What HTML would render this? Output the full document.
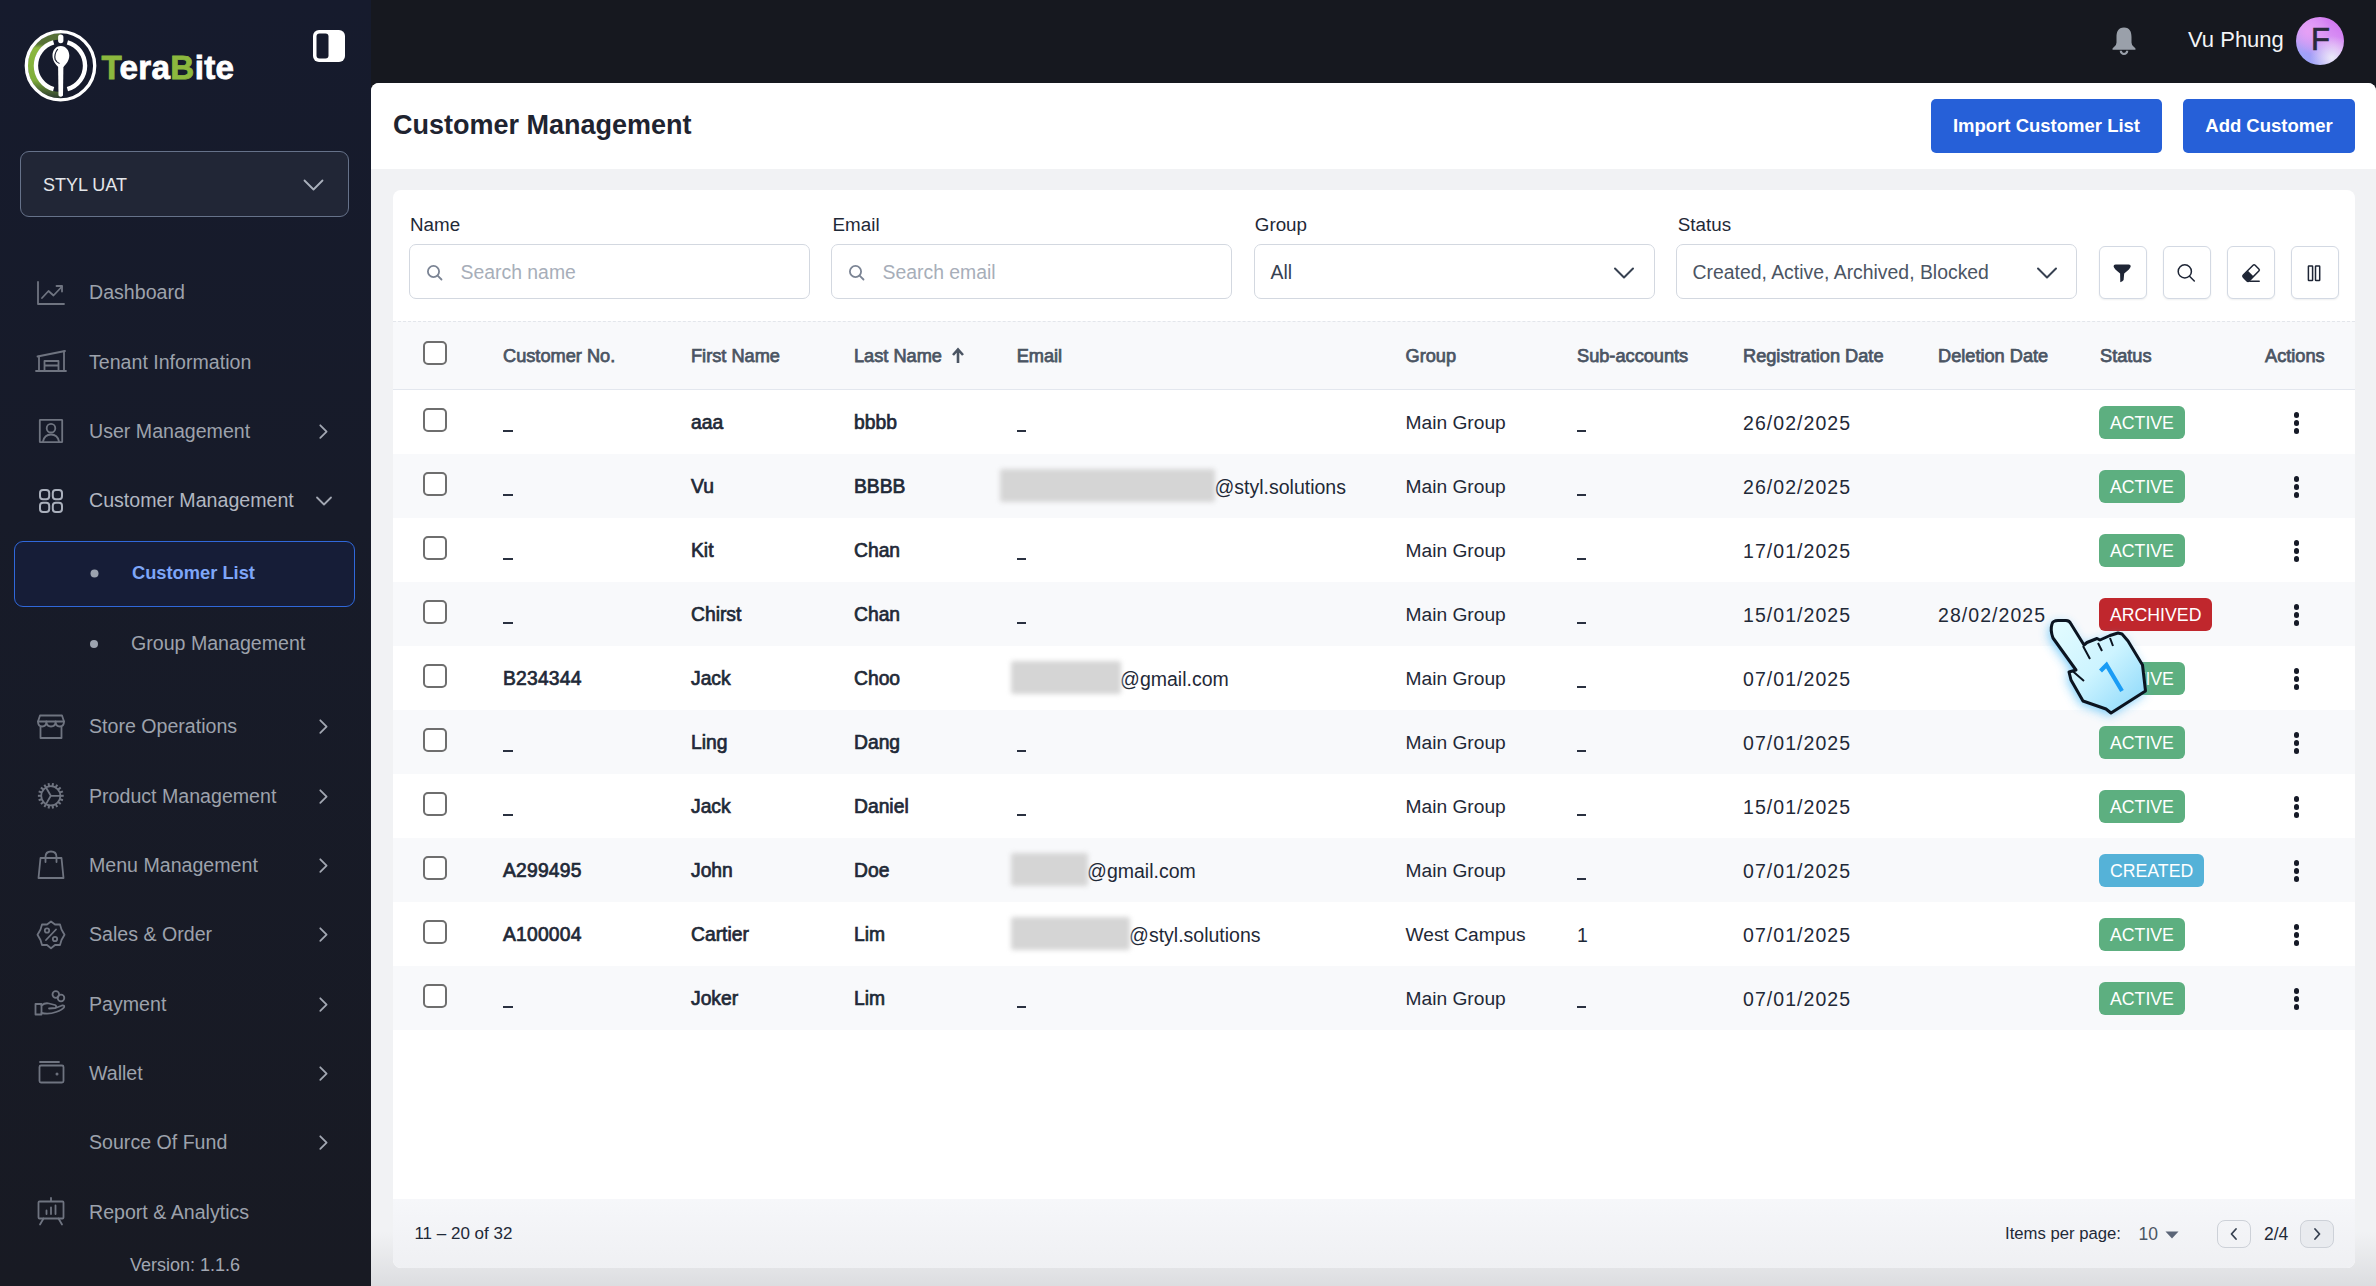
<!DOCTYPE html>
<html><head><meta charset="utf-8">
<style>
*{box-sizing:border-box;margin:0;padding:0}
html,body{width:2376px;height:1286px;overflow:hidden}
body{background:#16181f;font-family:"Liberation Sans",sans-serif;position:relative;color:#1f2937}
.abs{position:absolute}
#sidebar{position:absolute;left:0;top:0;width:371px;height:1286px;background:linear-gradient(180deg,#161b2d 0%,#171b29 40%,#181a23 100%)}
.mi{position:absolute;left:0;width:371px;height:40px;color:#9da2ac;font-size:19.6px;line-height:42px}
.mi .t{position:absolute;left:89px;top:0;white-space:nowrap}
.mi svg.ic{position:absolute;left:35px;top:6px}
.mi svg.ch{position:absolute;left:314px;top:12px}
#topbar{position:absolute;left:371px;top:0;width:2005px;height:83px;background:#16181f}
#main{position:absolute;left:371px;top:83px;width:2005px;height:1203px;background:linear-gradient(180deg,#f1f2f4 0%,#f1f2f4 95.5%,#dcdde0 100%);border-radius:8px 8px 0 0;overflow:hidden}
#hdr{position:absolute;left:0;top:0;width:2005px;height:86px;background:#fff}
.btn{position:absolute;top:16px;height:54px;background:#2660d8;border-radius:5px;color:#fff;font-weight:bold;font-size:18.5px;line-height:54px;text-align:center}
#card{position:absolute;left:22px;top:107px;width:1962px;height:1078px;background:#fff;border-radius:8px;overflow:hidden}
.lbl{position:absolute;top:26px;font-size:18.8px;color:#1f2937;white-space:nowrap}
.inp{position:absolute;top:53px;height:55px;border:1.5px solid #d3d8e0;border-radius:7px;background:#fff;font-size:19.4px;line-height:52px;white-space:nowrap}
.ib{position:absolute;top:56px;width:48px;height:53px;border:1.5px solid #d3d9e3;border-radius:6px;background:#fff;box-shadow:0 1px 2px rgba(16,24,40,0.07)}
#thead{position:absolute;left:0;top:131px;width:1962px;height:69px;background:#f8f9fb;border-top:1.5px dashed #e3e6eb;border-bottom:1.5px solid #e3e7ee}
.th{position:absolute;top:0;line-height:69px;font-size:18.2px;color:#4b5563;-webkit-text-stroke:0.75px #4b5563;white-space:nowrap}
.row{position:absolute;left:0;width:1962px;height:64px}
.row.alt{background:#f8f9fb}
.td{position:absolute;top:0;line-height:66px;font-size:19.5px;color:#1f2937;white-space:nowrap}
.td.b{font-weight:normal;font-size:19.3px;-webkit-text-stroke:0.7px #1f2937}
.td.dt{letter-spacing:1.05px}
.td.dn{letter-spacing:0.2px}
.td.grp{font-size:19.2px}
.us{position:absolute;top:39.5px;width:9.5px;height:2px;background:#2a3140}
.cb{position:absolute;left:30px;top:18px;width:24px;height:24px;border:2px solid #6e6e6e;border-radius:5px;background:#fff}
.badge{position:absolute;left:1706px;top:16px;height:33px;border-radius:6px;color:#fff;font-size:17.7px;line-height:35px;padding:0 11px;white-space:nowrap}
.g{background:#5aae7a}
.kb{position:absolute;left:1900px;top:22px;width:8px;height:26px}
.kb i{position:absolute;left:0.5px;width:5.6px;height:5.6px;border-radius:50%;background:#161a27}
.blur{position:absolute;height:33px;background:#d5d5d5;border-radius:2px;filter:blur(2.6px)}
#foot{position:absolute;left:0;top:1009px;width:1962px;height:69px;background:linear-gradient(180deg,#f6f7fa,#eff0f3)}
</style></head>
<body>
<div id="sidebar">
<div class="abs" style="left:20px;top:151px;width:329px;height:66px;border:1.5px solid #66728a;border-radius:9px;background:#212636"></div>
<div class="abs" style="left:14px;top:541px;width:341px;height:66px;border:1.5px solid #3068da;border-radius:9px;background:#161d37"></div>

<svg class="abs" style="left:0;top:0" width="371" height="1286" viewBox="0 0 371 1286">
 <defs>
  <linearGradient id="lg" gradientUnits="userSpaceOnUse" x1="0" y1="20" x2="0" y2="100">
   <stop offset="0.3" stop-color="#8cb83e" stop-opacity="0.55"/>
   <stop offset="0.35" stop-color="#8cb83e" stop-opacity="1"/>
   <stop offset="0.75" stop-color="#7fae3a" stop-opacity="1"/>
   <stop offset="0.98" stop-color="#6d9a35" stop-opacity="0.25"/>
  </linearGradient>
 </defs>
 <!-- logo -->
 <path d="M60.5,36.2 A29.5,29.5 0 0 0 60.5,95.2" fill="none" stroke="url(#lg)" stroke-width="6.4"/>
 <circle cx="60.5" cy="65.75" r="34.2" fill="none" stroke="#fff" stroke-width="3.3"/>
 <path d="M53.6,42.3 A24.4,24.4 0 0 0 53.6,89.2" fill="none" stroke="#fff" stroke-width="4.4"/>
 <path d="M67.4,42.3 A24.4,24.4 0 0 1 67.4,89.2" fill="none" stroke="#fff" stroke-width="4.4"/>
 <rect x="58.1" y="34.5" width="5.3" height="8.7" rx="2.6" fill="#fff"/>
 <path d="M60.8,46 C66,46 69.3,50.5 69.3,55.5 C69.3,61 65.5,64.5 63.4,67 L58.2,67 C56,64.5 52.5,61 52.5,55.5 C52.5,50.5 55.6,46 60.8,46 Z" fill="#fff"/>
 <path d="M57.8,49 Q53.8,54 55.2,59.5 Q56.5,62.5 59.5,63.5" fill="none" stroke="#161b2d" stroke-width="1.2"/>
 <path d="M58.1,66 L63.4,66 L63,95.5 Q60.75,98 58.5,95.5 Z" fill="#fff"/>
 <text x="101.5" y="78.6" font-family="Liberation Sans" font-weight="bold" font-size="33.2" letter-spacing="0.3" fill="#fff" stroke="#fff" stroke-width="0.8"><tspan fill="#8cb83e" stroke="#8cb83e">T</tspan>era<tspan fill="#8cb83e" stroke="#8cb83e">B</tspan>ite</text>
 <!-- toggle -->
 <rect x="313" y="30" width="32" height="32" rx="6" fill="#fff"/>
 <rect x="316.5" y="33.5" width="12" height="25" rx="3" fill="#161b2d"/>
 <g fill="none" stroke="#6f7480" stroke-width="1.8" stroke-linecap="round" stroke-linejoin="round">
  <!-- dashboard -->
  <path d="M38,282 L38,304 L64,304"/>
  <path d="M42,298 L48.5,291 L53.5,295.5 L62,286.5"/>
  <path d="M56.5,286 L62,286 L62,291.5"/>
  <!-- tenant -->
  <path d="M36,371 L66,371"/>
  <path d="M37.5,356.5 L65,351"/>
  <path d="M39,356.5 L39,371 M64,351.5 L64,371"/>
  <path d="M44.5,371 L44.5,361 L58.5,361 L58.5,371 M44.5,365.5 L58.5,365.5"/>
  <!-- user -->
  <rect x="39.8" y="419.8" width="22.4" height="22.4" rx="0.5"/>
  <circle cx="51" cy="428.2" r="4.3"/>
  <path d="M43,441.5 Q44.5,434.5 51,434.5 Q57.5,434.5 59,441.5"/>
  <!-- store -->
  <path d="M40.5,727 L40.5,738 L61.5,738 L61.5,727"/>
  <path d="M40,715.5 L62,715.5 L64,721.5 Q64,726.5 59.8,726.5 Q55.6,726.5 55.6,721.5 Q55.6,726.5 51,726.5 Q46.4,726.5 46.4,721.5 Q46.4,726.5 42.2,726.5 Q38,726.5 38,721.5 Z"/>
  <path d="M38,721.5 L64,721.5"/>
  <!-- product gear -->
  <circle cx="50.8" cy="795.8" r="9.6"/>
  <path d="M50.8,795.8 L60.5,795.8 M50.8,795.8 L46,787.5 M50.8,795.8 L46,804.1"/>
  <!-- bag -->
  <path d="M40.5,858 L61.5,858 L63.5,878 L38.5,878 Z"/>
  <path d="M45.5,862 L45.5,857 Q45.5,851.5 51,851.5 Q56.5,851.5 56.5,857 L56.5,862"/>
  <!-- sales badge -->
  <path d="M51,921.5 L55,924.5 L60,924.5 L61.5,929.5 L64.5,934.8 L61.5,940 L60,945 L55,945 L51,948.2 L47,945 L42,945 L40.5,940 L37.5,934.8 L40.5,929.5 L42,924.5 L47,924.5 Z"/>
  <circle cx="47" cy="930.5" r="2.2"/><circle cx="55" cy="939" r="2.2"/>
  <path d="M46,940 L56,929.5"/>
  <!-- payment -->
  <path d="M35.5,1004 L41.5,1004 L41.5,1014.5 L35.5,1014.5 Z"/>
  <path d="M41.5,1005.5 Q45,1002.5 49,1003.5 L55,1005 Q57,1006 55.5,1008 L49,1008.5 M41.5,1013 Q49,1014.5 56,1012 Q62,1010 64,1007.5 Q65,1005 62,1005.5 L55.5,1008"/>
  <circle cx="55.8" cy="994.5" r="3.3"/><circle cx="61" cy="998" r="3.3"/>
  <!-- wallet -->
  <path d="M40,1062 L59,1062"/>
  <rect x="39.5" y="1065.5" width="24" height="17" rx="1.5"/>
  <circle cx="57" cy="1074" r="0.6" fill="#6f7480"/>
  <!-- report -->
  <path d="M51,1198 L51,1201"/>
  <rect x="38.5" y="1201.5" width="25" height="17" rx="1"/>
  <path d="M43.5,1218.5 L40,1224.5 M58.5,1218.5 L62,1224.5"/>
  <path d="M46.5,1214 L46.5,1210.5 M51,1214 L51,1207.5 M55.5,1214 L55.5,1205.5"/>
 </g>
 <!-- gear teeth -->
 <g stroke="#6f7480" stroke-width="2"><path d="M60.40,795.80 L63.70,795.80"/><path d="M59.82,799.08 L62.92,800.21"/><path d="M58.15,801.97 L60.68,804.09"/><path d="M55.60,804.11 L57.25,806.97"/><path d="M52.47,805.25 L53.04,808.50"/><path d="M49.13,805.25 L48.56,808.50"/><path d="M46.00,804.11 L44.35,806.97"/><path d="M43.45,801.97 L40.92,804.09"/><path d="M41.78,799.08 L38.68,800.21"/><path d="M41.20,795.80 L37.90,795.80"/><path d="M41.78,792.52 L38.68,791.39"/><path d="M43.45,789.63 L40.92,787.51"/><path d="M46.00,787.49 L44.35,784.63"/><path d="M49.13,786.35 L48.56,783.10"/><path d="M52.47,786.35 L53.04,783.10"/><path d="M55.60,787.49 L57.25,784.63"/><path d="M58.15,789.63 L60.68,787.51"/><path d="M59.82,792.52 L62.92,791.39"/></g>
 <g fill="none" stroke="#aab0bc" stroke-width="2">
  <rect x="40" y="490" width="9.2" height="9.2" rx="3"/><rect x="52.8" y="490" width="9.2" height="9.2" rx="3"/>
  <rect x="40" y="502.8" width="9.2" height="9.2" rx="3"/><rect x="52.8" y="502.8" width="9.2" height="9.2" rx="3"/>
 </g>
 <g fill="none" stroke="#a2a7b2" stroke-width="1.8" stroke-linecap="round" stroke-linejoin="round">
  <path d="M320.3,425.3 L326.6,431.6 L320.3,437.9"/>
  <path d="M320.3,720.3 L326.6,726.6 L320.3,732.9"/>
  <path d="M320.3,790.3 L326.6,796.6 L320.3,802.9"/>
  <path d="M320.3,859.3 L326.6,865.6 L320.3,871.9"/>
  <path d="M320.3,928.3 L326.6,934.6 L320.3,940.9"/>
  <path d="M320.3,998.3 L326.6,1004.6 L320.3,1010.9"/>
  <path d="M320.3,1067.3 L326.6,1073.6 L320.3,1079.9"/>
  <path d="M320.3,1136.3 L326.6,1142.6 L320.3,1148.9"/>
  <path d="M317,497.5 L324,504.5 L331,497.5"/>
  <path d="M304.5,180.5 L313.5,189.5 L322.5,180.5" stroke="#aab0bc"/>
 </g>
 <circle cx="94.5" cy="573.6" r="4" fill="#9ca3af"/>
 <circle cx="94" cy="644" r="4" fill="#9ca3af"/>
</svg>
<div class="abs" style="left:43px;top:173px;font-size:18px;line-height:24px;color:#e4e6ea">STYL UAT</div>
<div class="mi" style="top:271px"><span class="t">Dashboard</span></div>
<div class="mi" style="top:341px"><span class="t">Tenant Information</span></div>
<div class="mi" style="top:410px"><span class="t">User Management</span></div>
<div class="mi" style="top:479px;color:#b2b7c1"><span class="t">Customer Management</span></div>
<div class="mi" style="top:705px"><span class="t">Store Operations</span></div>
<div class="mi" style="top:775px"><span class="t">Product Management</span></div>
<div class="mi" style="top:844px"><span class="t">Menu Management</span></div>
<div class="mi" style="top:913px"><span class="t">Sales &amp; Order</span></div>
<div class="mi" style="top:983px"><span class="t">Payment</span></div>
<div class="mi" style="top:1052px"><span class="t">Wallet</span></div>
<div class="mi" style="top:1121px"><span class="t">Source Of Fund</span></div>
<div class="mi" style="top:1191px"><span class="t">Report &amp; Analytics</span></div>
<div class="mi" style="top:552px;color:#7ea6f8;font-weight:bold;font-size:18.3px"><span class="t" style="left:132px">Customer List</span></div>
<div class="mi" style="top:622px"><span class="t" style="left:131px">Group Management</span></div>
<div class="mi" style="top:1244px;font-size:18px;color:#a2a7b2"><span class="t" style="left:130px">Version: 1.1.6</span></div>
</div>
<div id="topbar">
 <svg class="abs" style="left:1740px;top:26px" width="26" height="30" viewBox="0 0 26 30">
  <path d="M13,1.5 C7,1.5 5.5,6 5.5,11 L5.5,16.5 Q5.5,19.5 3,21 Q1,22.2 1.5,23.8 L24.5,23.8 Q25,22.2 23,21 Q20.5,19.5 20.5,16.5 L20.5,11 C20.5,6 19,1.5 13,1.5 Z" fill="#9aa0aa"/>
  <path d="M9.8,24.8 A3.2,3.2 0 0 0 16.2,24.8" fill="none" stroke="#9aa0aa" stroke-width="2.2"/>
 </svg>
 <div class="abs" style="left:1817px;top:25px;font-size:22px;line-height:30px;color:#f3f4f6;white-space:nowrap">Vu Phung</div>
 <div class="abs" style="left:1925px;top:17px;width:48px;height:48px;border-radius:50%;background:radial-gradient(circle at 75% 85%,#eceaf9 0%,rgba(236,234,249,0) 40%),radial-gradient(circle at 25% 30%,#e6a0f6 0%,rgba(230,160,246,0) 45%),linear-gradient(215deg,#d274f2 8%,#d99af4 45%,#a49ff7 75%,#9aa4f8 90%)"></div>
 <div class="abs" style="left:1925px;top:15.8px;width:48px;height:48px;text-align:center;font-size:31px;line-height:48px;color:#2a2a3c;-webkit-text-stroke:0.7px #2a2a3c;padding-left:1px">F</div>
</div>
<div id="main">
 <div id="hdr">
  <div class="abs" style="left:22px;top:25px;font-weight:bold;font-size:27px;line-height:34px;color:#1f2430;white-space:nowrap">Customer Management</div>
  <div class="btn" style="left:1560px;width:231px">Import Customer List</div>
  <div class="btn" style="left:1812px;width:172px">Add Customer</div>
 </div>
 <div id="card">
  <div class="lbl" style="left:17px;line-height:24px;top:23.4px">Name</div>
  <div class="lbl" style="left:439.6px;line-height:24px;top:23.4px">Email</div>
  <div class="lbl" style="left:861.8px;line-height:24px;top:23.4px">Group</div>
  <div class="lbl" style="left:1284.8px;line-height:24px;top:23.4px">Status</div>
  <div class="inp" style="left:16px;width:401px;top:53.6px"><svg class="abs" style="left:16px;top:19px" width="18" height="18" viewBox="0 0 18 18"><circle cx="7.5" cy="7.5" r="5.6" fill="none" stroke="#7b8494" stroke-width="1.8"/><path d="M11.6,11.6 L15.5,15.5" stroke="#7b8494" stroke-width="1.8" stroke-linecap="round"/></svg><span class="abs" style="left:50.5px;top:10px;line-height:34px;color:#a7aeb9">Search name</span></div>
  <div class="inp" style="left:438px;width:401px;top:53.6px"><svg class="abs" style="left:16px;top:19px" width="18" height="18" viewBox="0 0 18 18"><circle cx="7.5" cy="7.5" r="5.6" fill="none" stroke="#7b8494" stroke-width="1.8"/><path d="M11.6,11.6 L15.5,15.5" stroke="#7b8494" stroke-width="1.8" stroke-linecap="round"/></svg><span class="abs" style="left:50.5px;top:10px;line-height:34px;color:#a7aeb9">Search email</span></div>
  <div class="inp" style="left:861px;width:401px;top:53.6px"><span class="abs" style="left:15.5px;top:10px;line-height:34px;color:#374151">All</span><svg class="abs" style="left:358px;top:21px" width="22" height="14" viewBox="0 0 22 14"><path d="M2,2.5 L11,11.5 L20,2.5" fill="none" stroke="#374151" stroke-width="2" stroke-linecap="round" stroke-linejoin="round"/></svg></div>
  <div class="inp" style="left:1283px;width:401px;top:53.6px"><span class="abs" style="left:15.5px;top:10px;line-height:34px;color:#4b5563">Created, Active, Archived, Blocked</span><svg class="abs" style="left:359px;top:21px" width="22" height="14" viewBox="0 0 22 14"><path d="M2,2.5 L11,11.5 L20,2.5" fill="none" stroke="#374151" stroke-width="2" stroke-linecap="round" stroke-linejoin="round"/></svg></div>
  <div class="ib" style="left:1706px;top:56.4px"><svg class="abs" style="left:10.4px;top:12.7px" width="24" height="24" viewBox="0 0 24 24"><path d="M3.6,6.6 Q3.4,4.6 5.6,4.6 L18.7,4.6 Q20.9,4.6 20.7,6.6 Q20.3,9 14.2,13.4 L13.6,20 Q12.8,21.6 10.3,22.2 L10.1,13.4 Q4,9 3.6,6.6 Z" fill="#1e2535"/></svg></div>
  <div class="ib" style="left:1770px;top:56.4px"><svg class="abs" style="left:10.4px;top:12.7px" width="24" height="24" viewBox="0 0 24 24"><circle cx="10.8" cy="11.4" r="6.6" fill="none" stroke="#1e2535" stroke-width="1.5"/><path d="M15.5,16.2 L20.3,21" stroke="#1e2535" stroke-width="1.5" stroke-linecap="round"/></svg></div>
  <div class="ib" style="left:1834px;top:56.4px"><svg class="abs" style="left:10.4px;top:12.7px" width="24" height="24" viewBox="0 0 24 24"><g transform="rotate(-45 13 13)"><rect x="4.6" y="9" width="16.8" height="8.2" rx="1.5" fill="none" stroke="#1e2535" stroke-width="1.5"/><path d="M4.8,10.3 Q4.8,9.2 5.9,9.2 L12.4,9.2 L12.4,17 L5.9,17 Q4.8,17 4.8,15.9 Z" fill="#1e2535"/></g><path d="M11.8,21.2 L21.2,21.2" stroke="#1e2535" stroke-width="1.5" stroke-linecap="round"/></svg></div>
  <div class="ib" style="left:1898px;top:56.4px"><svg class="abs" style="left:10.4px;top:12.7px" width="24" height="24" viewBox="0 0 24 24"><rect x="6.4" y="6" width="4.2" height="14.6" rx="0.6" fill="none" stroke="#1e2535" stroke-width="1.5"/><rect x="13.5" y="6" width="4.2" height="14.6" rx="0.6" fill="none" stroke="#1e2535" stroke-width="1.5"/></svg></div>
  <div id="thead">
   <div class="cb" style="top:19px"></div>
   <div class="th" style="left:110px">Customer No.</div>
   <div class="th" style="left:298px">First Name</div>
   <div class="th" style="left:461px">Last Name</div>
   <div class="th" style="left:623.7px">Email</div>
   <div class="th" style="left:1012.5px">Group</div>
   <div class="th" style="left:1184px">Sub-accounts</div>
   <div class="th" style="left:1350px">Registration Date</div>
   <div class="th" style="left:1545px">Deletion Date</div>
   <div class="th" style="left:1707px">Status</div>
   <div class="th" style="left:1872px">Actions</div>
   <svg class="abs" style="left:557px;top:25px" width="16" height="18" viewBox="0 0 16 18"><path d="M8,16 L8,3 M3,8 L8,2.5 L13,8" fill="none" stroke="#4b5563" stroke-width="2.6" stroke-linejoin="miter"/></svg>
  </div>
  <div class="row" style="top:200px">
   <div class="cb"></div>
   <i class="us" style="left:110px"></i>
   <div class="td b" style="left:298px">aaa</div>
   <div class="td b" style="left:461px">bbbb</div>
   <i class="us" style="left:623.5px"></i>
   <div class="td grp" style="left:1012.5px">Main Group</div>
   <i class="us" style="left:1183.5px"></i>
   <div class="td dt" style="left:1350px">26/02/2025</div>
   <div class="badge" style="background:#5daf80">ACTIVE</div>
   <div class="kb"><i style="top:0"></i><i style="top:8px"></i><i style="top:16px"></i></div>
  </div>
  <div class="row alt" style="top:264px">
   <div class="cb"></div>
   <i class="us" style="left:110px"></i>
   <div class="td b" style="left:298px">Vu</div>
   <div class="td b" style="left:461px">BBBB</div>
   <div class="td" style="left:821.5px">@styl.solutions</div>
   <div class="blur" style="left:607px;width:215px;top:14.5px"></div>
   <div class="td grp" style="left:1012.5px">Main Group</div>
   <i class="us" style="left:1183.5px"></i>
   <div class="td dt" style="left:1350px">26/02/2025</div>
   <div class="badge" style="background:#5daf80">ACTIVE</div>
   <div class="kb"><i style="top:0"></i><i style="top:8px"></i><i style="top:16px"></i></div>
  </div>
  <div class="row" style="top:328px">
   <div class="cb"></div>
   <i class="us" style="left:110px"></i>
   <div class="td b" style="left:298px">Kit</div>
   <div class="td b" style="left:461px">Chan</div>
   <i class="us" style="left:623.5px"></i>
   <div class="td grp" style="left:1012.5px">Main Group</div>
   <i class="us" style="left:1183.5px"></i>
   <div class="td dt" style="left:1350px">17/01/2025</div>
   <div class="badge" style="background:#5daf80">ACTIVE</div>
   <div class="kb"><i style="top:0"></i><i style="top:8px"></i><i style="top:16px"></i></div>
  </div>
  <div class="row alt" style="top:392px">
   <div class="cb"></div>
   <i class="us" style="left:110px"></i>
   <div class="td b" style="left:298px">Chirst</div>
   <div class="td b" style="left:461px">Chan</div>
   <i class="us" style="left:623.5px"></i>
   <div class="td grp" style="left:1012.5px">Main Group</div>
   <i class="us" style="left:1183.5px"></i>
   <div class="td dt" style="left:1350px">15/01/2025</div>
   <div class="td dt" style="left:1545px">28/02/2025</div>
   <div class="badge" style="background:#c0272d">ARCHIVED</div>
   <div class="kb"><i style="top:0"></i><i style="top:8px"></i><i style="top:16px"></i></div>
  </div>
  <div class="row" style="top:456px">
   <div class="cb"></div>
   <div class="td b dn" style="left:110px">B234344</div>
   <div class="td b" style="left:298px">Jack</div>
   <div class="td b" style="left:461px">Choo</div>
   <div class="td" style="left:727.1px">@gmail.com</div>
   <div class="blur" style="left:617.6px;width:110px;top:14.5px"></div>
   <div class="td grp" style="left:1012.5px">Main Group</div>
   <i class="us" style="left:1183.5px"></i>
   <div class="td dt" style="left:1350px">07/01/2025</div>
   <div class="badge" style="background:#5daf80">ACTIVE</div>
   <div class="kb"><i style="top:0"></i><i style="top:8px"></i><i style="top:16px"></i></div>
  </div>
  <div class="row alt" style="top:520px">
   <div class="cb"></div>
   <i class="us" style="left:110px"></i>
   <div class="td b" style="left:298px">Ling</div>
   <div class="td b" style="left:461px">Dang</div>
   <i class="us" style="left:623.5px"></i>
   <div class="td grp" style="left:1012.5px">Main Group</div>
   <i class="us" style="left:1183.5px"></i>
   <div class="td dt" style="left:1350px">07/01/2025</div>
   <div class="badge" style="background:#5daf80">ACTIVE</div>
   <div class="kb"><i style="top:0"></i><i style="top:8px"></i><i style="top:16px"></i></div>
  </div>
  <div class="row" style="top:584px">
   <div class="cb"></div>
   <i class="us" style="left:110px"></i>
   <div class="td b" style="left:298px">Jack</div>
   <div class="td b" style="left:461px">Daniel</div>
   <i class="us" style="left:623.5px"></i>
   <div class="td grp" style="left:1012.5px">Main Group</div>
   <i class="us" style="left:1183.5px"></i>
   <div class="td dt" style="left:1350px">15/01/2025</div>
   <div class="badge" style="background:#5daf80">ACTIVE</div>
   <div class="kb"><i style="top:0"></i><i style="top:8px"></i><i style="top:16px"></i></div>
  </div>
  <div class="row alt" style="top:648px">
   <div class="cb"></div>
   <div class="td b dn" style="left:110px">A299495</div>
   <div class="td b" style="left:298px">John</div>
   <div class="td b" style="left:461px">Doe</div>
   <div class="td" style="left:694.1px">@gmail.com</div>
   <div class="blur" style="left:617.6px;width:77px;top:14.5px"></div>
   <div class="td grp" style="left:1012.5px">Main Group</div>
   <i class="us" style="left:1183.5px"></i>
   <div class="td dt" style="left:1350px">07/01/2025</div>
   <div class="badge" style="background:#55b2d8">CREATED</div>
   <div class="kb"><i style="top:0"></i><i style="top:8px"></i><i style="top:16px"></i></div>
  </div>
  <div class="row" style="top:712px">
   <div class="cb"></div>
   <div class="td b dn" style="left:110px">A100004</div>
   <div class="td b" style="left:298px">Cartier</div>
   <div class="td b" style="left:461px">Lim</div>
   <div class="td" style="left:736.1px">@styl.solutions</div>
   <div class="blur" style="left:617.6px;width:119px;top:14.5px"></div>
   <div class="td grp" style="left:1012.5px">West Campus</div>
   <div class="td" style="left:1184px">1</div>
   <div class="td dt" style="left:1350px">07/01/2025</div>
   <div class="badge" style="background:#5daf80">ACTIVE</div>
   <div class="kb"><i style="top:0"></i><i style="top:8px"></i><i style="top:16px"></i></div>
  </div>
  <div class="row alt" style="top:776px">
   <div class="cb"></div>
   <i class="us" style="left:110px"></i>
   <div class="td b" style="left:298px">Joker</div>
   <div class="td b" style="left:461px">Lim</div>
   <i class="us" style="left:623.5px"></i>
   <div class="td grp" style="left:1012.5px">Main Group</div>
   <i class="us" style="left:1183.5px"></i>
   <div class="td dt" style="left:1350px">07/01/2025</div>
   <div class="badge" style="background:#5daf80">ACTIVE</div>
   <div class="kb"><i style="top:0"></i><i style="top:8px"></i><i style="top:16px"></i></div>
  </div>
  <div id="foot">
   <div class="abs" style="left:21.4px;top:20px;font-size:17px;line-height:30px;color:#1f2937;white-space:nowrap">11 – 20 of 32</div>
   <div class="abs" style="left:1612px;top:20px;font-size:16.7px;line-height:30px;color:#1f2937;white-space:nowrap">Items per page:</div>
   <div class="abs" style="left:1745.5px;top:20px;font-size:17.5px;line-height:30px;color:#4b5563;white-space:nowrap">10</div>
   <svg class="abs" style="left:1772px;top:32px" width="14" height="8" viewBox="0 0 14 8"><path d="M0.5,0.5 L13.5,0.5 L7,7.5 Z" fill="#5b6577"/></svg>
   <div class="abs" style="left:1824px;top:21px;width:34px;height:28px;border:1.5px solid #cdd1d8;border-radius:8px"></div>
   <svg class="abs" style="left:1835px;top:28px" width="12" height="14" viewBox="0 0 12 14"><path d="M8,2 L3.5,7 L8,12" fill="none" stroke="#374151" stroke-width="1.8" stroke-linecap="round" stroke-linejoin="round"/></svg>
   <div class="abs" style="left:1871px;top:20px;font-size:17.5px;line-height:30px;color:#1f2937;white-space:nowrap">2/4</div>
   <div class="abs" style="left:1907px;top:21px;width:34px;height:28px;border:1.5px solid #cdd1d8;border-radius:8px;background:#e9ebef"></div>
   <svg class="abs" style="left:1918px;top:28px" width="12" height="14" viewBox="0 0 12 14"><path d="M4,2 L8.5,7 L4,12" fill="none" stroke="#374151" stroke-width="1.8" stroke-linecap="round" stroke-linejoin="round"/></svg>
  </div>
 </div>
</div>
<svg class="abs" style="left:2010px;top:590px" width="170" height="160" viewBox="2010 590 170 160">
 <defs>
  <filter id="glow" x="-50%" y="-50%" width="200%" height="200%"><feGaussianBlur stdDeviation="5.5"/></filter>
  <linearGradient id="hf" x1="0" y1="0" x2="1" y2="1"><stop offset="0" stop-color="#e4fcff"/><stop offset="0.5" stop-color="#cdf4ff"/><stop offset="1" stop-color="#86d6fa"/></linearGradient>
 </defs>
 <path transform="translate(-2,3)" d="M2052,624 Q2053,620.5 2058,620.5 L2066,620.5 Q2069.5,620.5 2071,624 L2084,645 L2087,642.5 L2097,638.5 L2100,640 L2110,635.5 L2118,633 L2122,634 L2128,641 L2142.5,665 L2145.5,691 L2111,713 L2106,709 L2083,701 L2071,680 L2069,672 L2076,670 L2053,638 Q2050,630 2052,624 Z" fill="#35b3f6" opacity="0.7" filter="url(#glow)"/>
 <path d="M2052,624 Q2053,620.5 2058,620.5 L2066,620.5 Q2069.5,620.5 2071,624 L2084,645 L2087,642.5 L2097,638.5 L2100,640 L2110,635.5 L2118,633 L2122,634 L2128,641 L2142.5,665 L2145.5,691 L2111,713 L2106,709 L2083,701 L2071,680 L2069,672 L2076,670 L2053,638 Q2050,630 2052,624 Z" fill="url(#hf)" stroke="#0b1420" stroke-width="3" stroke-linejoin="round"/>
 <path d="M2083,646 L2090,659 M2098,643 L2102,651 M2110,638 L2113,646 M2072.5,671 L2084,681" stroke="#0b1420" stroke-width="2" fill="none"/>
 <path d="M2100.5,671 L2106.5,665 L2122,691" stroke="#1a9cf5" stroke-width="4.2" fill="none" stroke-linejoin="miter"/>
</svg>
</body></html>
